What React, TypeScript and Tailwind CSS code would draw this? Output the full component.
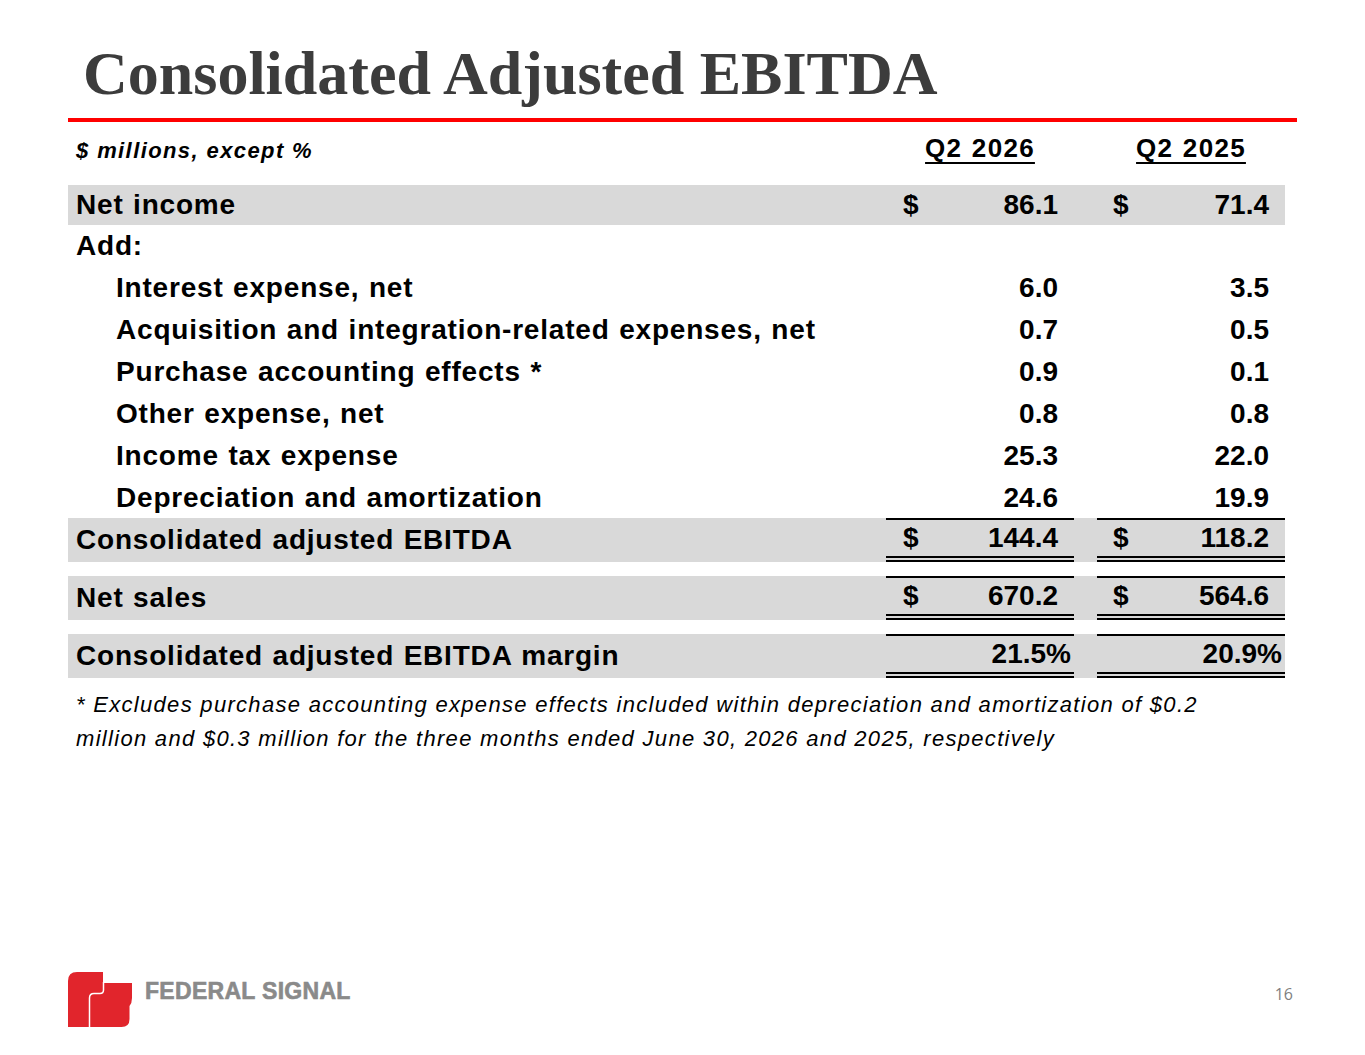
import React from "react";

type Row = {
  label: string;
  indent?: boolean;
  v1?: string;
  v2?: string;
  dollar?: boolean;
  band?: boolean;
};

const rows: Row[] = [
  { label: "Net income", v1: "86.1", v2: "71.4", dollar: true, band: true },
  { label: "Add:" },
  { label: "Interest expense, net", indent: true, v1: "6.0", v2: "3.5" },
  { label: "Acquisition and integration-related expenses, net", indent: true, v1: "0.7", v2: "0.5" },
  { label: "Purchase accounting effects *", indent: true, v1: "0.9", v2: "0.1" },
  { label: "Other expense, net", indent: true, v1: "0.8", v2: "0.8" },
  { label: "Income tax expense", indent: true, v1: "25.3", v2: "22.0" },
  { label: "Depreciation and amortization", indent: true, v1: "24.6", v2: "19.9" },
];

function Logo() {
  return (
    <svg width="64" height="56" viewBox="0 0 64 56">
      <path
        d="M0 55 V9 Q0 0 9 0 H35 V11 H64 V26 Q64 31 61.5 34 V47 Q61.5 55 53.5 55 Z"
        fill="#e1252c"
      />
      <path
        d="M21.5 57 V26 Q21.5 21.5 26 21.5 H32 Q35.5 21.5 35.5 18 V10"
        fill="none"
        stroke="#ffffff"
        strokeWidth="1.5"
      />
    </svg>
  );
}

function TotalRow({
  label,
  v1,
  v2,
  dollar,
  pct,
}: {
  label: string;
  v1: string;
  v2: string;
  dollar?: boolean;
  pct?: boolean;
}) {
  return (
    <div className="flex h-[44px] bg-[#d9d9d9]">
      <div className="flex-1 flex items-center pl-[8px]">{label}</div>
      <div
        className={`w-[188px] flex items-center justify-between border-t-2 border-b-[6px] border-double border-black pl-[17px] tracking-normal ${
          pct ? "pr-[3px]" : "pr-[16px]"
        }`}
        style={{ borderTopStyle: "solid" }}
      >
        <span>{dollar ? "$" : ""}</span>
        <span>{v1}</span>
      </div>
      <div className="w-[23px]" />
      <div
        className={`w-[188px] flex items-center justify-between border-t-2 border-b-[6px] border-double border-black pl-[16px] tracking-normal ${
          pct ? "pr-[3px]" : "pr-[16px]"
        }`}
        style={{ borderTopStyle: "solid" }}
      >
        <span>{dollar ? "$" : ""}</span>
        <span>{v2}</span>
      </div>
    </div>
  );
}

export default function App() {
  return (
    <div className="w-[1365px] h-[1055px] bg-white flex flex-col overflow-hidden font-['Liberation_Sans',Arial,sans-serif] text-black">
      {/* Title */}
      <div className="pt-[42px] pl-[83px] h-[104px]">
        <div className="font-['Liberation_Serif','Times_New_Roman',serif] font-bold text-[62px] leading-[62px] text-[#3c3c3c]">
          Consolidated Adjusted EBITDA
        </div>
      </div>
      <div className="mt-[14px] ml-[68px] w-[1229px] h-[4px] bg-[#ff0000]" />

      {/* Table */}
      <div className="ml-[68px] w-[1217px] font-bold text-[28px] leading-[28px] tracking-[0.8px] [word-spacing:1px]">
        {/* header */}
        <div className="flex h-[63px] items-start">
          <div className="flex-1 pl-[8px] mt-[18px] italic text-[22px] leading-[22px] tracking-[1.4px] [word-spacing:0px]">
            $ millions, except %
          </div>
          <div className="w-[188px] mt-[13px] text-center text-[26px] leading-[26px] tracking-[1.3px]">
            <span className="underline decoration-2 underline-offset-[5px]">Q2 2026</span>
          </div>
          <div className="w-[23px]" />
          <div className="w-[188px] mt-[13px] text-center text-[26px] leading-[26px] tracking-[1.3px]">
            <span className="underline decoration-2 underline-offset-[5px]">Q2 2025</span>
          </div>
        </div>

        {rows.map((r, i) => (
          <div
            key={i}
            className={`flex items-center ${r.band ? "h-[40px] bg-[#d9d9d9]" : "h-[42px]"}`}
          >
            <div className={`flex-1 ${r.indent ? "pl-[48px]" : "pl-[8px]"}`}>{r.label}</div>
            <div className="w-[188px] flex justify-between pl-[17px] pr-[16px] tracking-normal">
              <span>{r.dollar ? "$" : ""}</span>
              <span>{r.v1 ?? ""}</span>
            </div>
            <div className="w-[23px]" />
            <div className="w-[188px] flex justify-between pl-[16px] pr-[16px] tracking-normal">
              <span>{r.dollar ? "$" : ""}</span>
              <span>{r.v2 ?? ""}</span>
            </div>
          </div>
        ))}

        <div className="flex flex-col gap-[14px] mt-[-1px]">
          <TotalRow label="Consolidated adjusted EBITDA" v1="144.4" v2="118.2" dollar />
          <TotalRow label="Net sales" v1="670.2" v2="564.6" dollar />
          <TotalRow label="Consolidated adjusted EBITDA margin" v1="21.5%" v2="20.9%" pct />
        </div>
      </div>

      {/* Footnote */}
      <div className="ml-[76px] mt-[10px] w-[1240px] italic text-[22px] leading-[34px] tracking-[1.3px]">
        * Excludes purchase accounting expense effects included within depreciation and amortization of $0.2
        <br />
        million and $0.3 million for the three months ended June 30, 2026 and 2025, respectively
      </div>

      {/* Footer */}
      <div className="mt-auto mb-[27px] h-[56px] flex items-start pl-[68px] pr-[72px]">
        <Logo />
        <div className="ml-[13px] mt-[8px] font-bold text-[23px] leading-[23px] text-[#8a8a8a] tracking-[0.3px] [-webkit-text-stroke:0.6px_#8a8a8a]">
          FEDERAL SIGNAL
        </div>
        <div className="ml-auto mt-[13px] text-[16px] leading-[18px] text-[#7f7f7f] font-['Open_Sans',sans-serif]">
          16
        </div>
      </div>
    </div>
  );
}
